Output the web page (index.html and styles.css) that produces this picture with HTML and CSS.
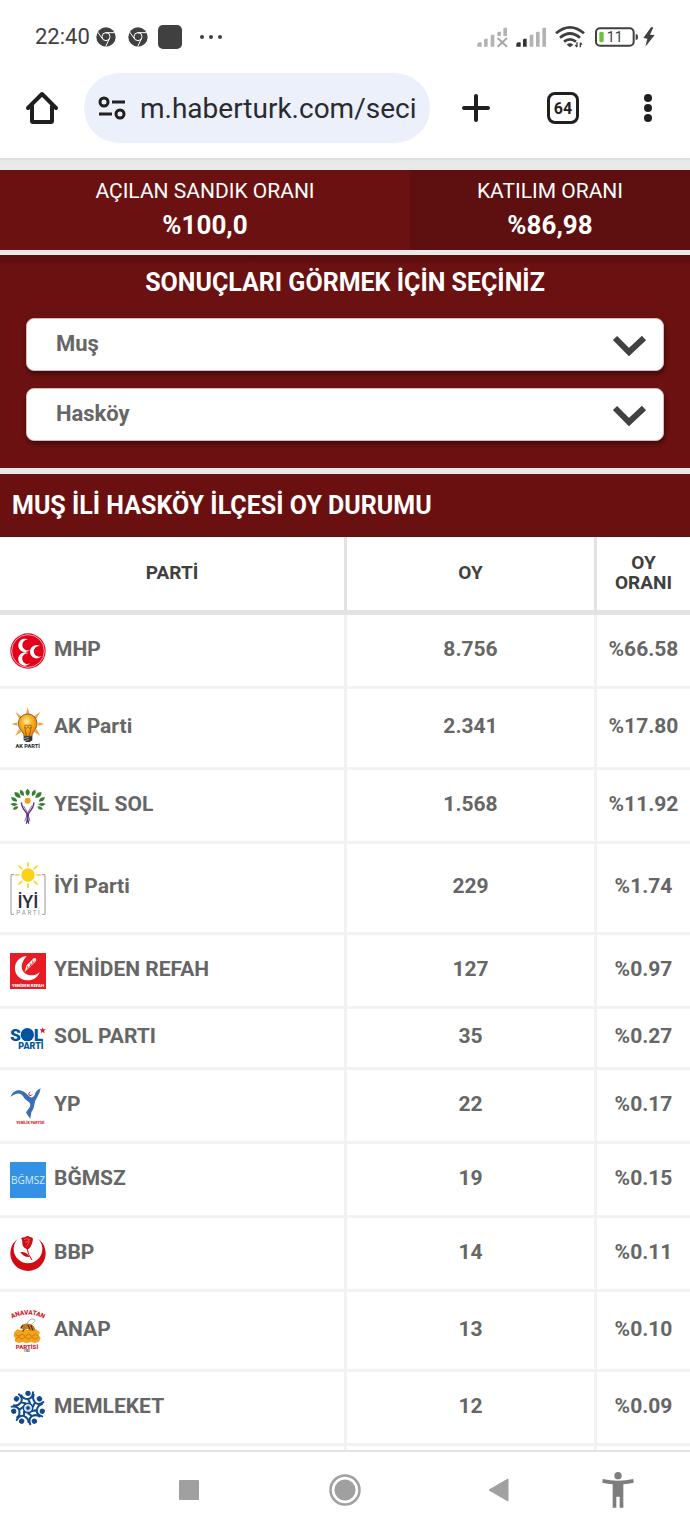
FILE: index.html
```html
<!DOCTYPE html>
<html lang="tr">
<head>
    <meta charset="UTF-8">
    <meta name="viewport" content="width=device-width, initial-scale=1.0">
    <title>Muş Hasköy Seçim Sonuçları</title>
    <link rel="stylesheet" href="styles.css">
</head>
<body>
    <!-- Status bar -->
    <div class="status-bar">
        <div class="status-left">
            <span class="clock">22:40</span>
            <svg class="chrome-icon" width="20" height="20" viewBox="0 0 60 60">
                <circle cx="30" cy="30" r="29" fill="#404040"/>
                <g fill="none" stroke="#fff" stroke-width="3">
                    <circle cx="30" cy="29" r="12"/>
                    <path d="M28 17h28M20 36L4 14M40 35L29 59"/>
                </g>
            </svg>
            <svg class="chrome-icon" width="20" height="20" viewBox="0 0 60 60">
                <circle cx="30" cy="30" r="29" fill="#404040"/>
                <g fill="none" stroke="#fff" stroke-width="3">
                    <circle cx="30" cy="29" r="12"/>
                    <path d="M28 17h28M20 36L4 14M40 35L29 59"/>
                </g>
            </svg>
            <span class="app-square"></span>
            <svg class="more-dots" width="24" height="6" viewBox="0 0 24 6" fill="#404040">
                <circle cx="3" cy="3" r="2"/><circle cx="12" cy="3" r="2"/><circle cx="21" cy="3" r="2"/>
            </svg>
        </div>
        <div class="status-right">
            <svg width="31" height="20" viewBox="0 0 93 60" fill="#b3b3b3">
                <path d="M1 59v-7q0-6 6-6h7v13zM21 59V39q0-4 5-4h6v24zM41 59V27q0-4 5-4h6v36zM61 27V18q0-4 5-4h6v13zM79 27V6q0-4 5-4h6v25z"/>
                <path d="M62 33l28 26M90 33L62 59" stroke="#a8a8a8" stroke-width="6"/>
            </svg>
            <svg width="31" height="20" viewBox="0 0 93 60" fill="#b3b3b3">
                <path fill="#333" d="M1 59v-7q0-6 6-6h7v13zM21 59V39q0-4 5-4h6v24z"/>
                <path d="M41 59V27q0-4 5-4h6v36zM60 59V18q0-4 5-4h6v45zM79 59V6q0-4 5-4h6v57z"/>
            </svg>
            <svg width="30" height="22" viewBox="0 0 90 66" fill="none" stroke="#404040" stroke-width="8">
                <path d="M3 22Q45-14 87 22M15 35Q45 10 75 35M27 47Q45 33 63 47"/>
                <path d="M35 56q10-8 20 0L45 64z" fill="#404040" stroke="none"/>
                <path d="M66 49v14M61 57l5 6M76 64V50M81 56l-5-6" stroke-width="4"/>
            </svg>
            <svg class="battery" width="43" height="20" viewBox="0 0 129 60">
                <rect x="3" y="4" width="113" height="52" rx="12" fill="none" stroke="#404040" stroke-width="6"/>
                <rect x="13" y="14" width="13" height="32" rx="5" fill="#6cc13a"/>
                <path d="M122 21q7 0 7 9t-7 9z" fill="#404040"/>
                <text x="35" y="45" font-size="43" fill="#404040">11</text>
            </svg>
            <svg width="12" height="20" viewBox="0 0 36 60" fill="#404040">
                <path d="M24 1L1 33l12 2L7 59l28-35-14-1 10-22z"/>
            </svg>
        </div>
    </div>

    <!-- Browser toolbar -->
    <header class="toolbar">
        <button class="icon-btn" aria-label="Ana sayfa">
            <svg width="32" height="34" viewBox="0 0 32 34" fill="none" stroke="#1f1f1f" stroke-width="4" stroke-linecap="round" stroke-linejoin="round">
                <path d="M2 17L16 3l14 14M6 15v15q0 1 1 1h18q1 0 1-1V15"/>
            </svg>
        </button>
        <div class="url-bar">
            <svg width="28" height="24" viewBox="0 0 28 24" fill="none" stroke="#1f1f1f" stroke-width="3">
                <circle cx="6" cy="6" r="4"/><circle cx="22" cy="18" r="4"/>
                <path d="M14 6h13M1 18h13"/>
            </svg>
            <input type="text" value="m.haberturk.com/seci" aria-label="Adres">
        </div>
        <button class="icon-btn plus" aria-label="Yeni sekme">
            <svg width="28" height="28" viewBox="0 0 28 28" stroke="#1f1f1f" stroke-width="4" stroke-linecap="round">
                <path d="M14 2v24M2 14h24"/>
            </svg>
        </button>
        <button class="icon-btn tabs" aria-label="Sekmeler">64</button>
        <button class="icon-btn menu" aria-label="Menü">
            <svg width="10" height="30" viewBox="0 0 10 30" fill="#1f1f1f">
                <circle cx="5" cy="5" r="4"/><circle cx="5" cy="15" r="4"/><circle cx="5" cy="25" r="4"/>
            </svg>
        </button>
    </header>

    <main>
        <section class="stats">
            <div class="stat">
                <div class="stat-label">AÇILAN SANDIK ORANI</div>
                <div class="stat-value">%100,0</div>
            </div>
            <div class="stat stat-dark">
                <div class="stat-label">KATILIM ORANI</div>
                <div class="stat-value">%86,98</div>
            </div>
        </section>

        <section class="picker">
            <h2>SONUÇLARI GÖRMEK İÇİN SEÇİNİZ</h2>
            <div class="select-box">
                <select aria-label="İl"><option>Muş</option></select>
                <svg width="33" height="22" viewBox="0 0 33 22" fill="none" stroke="#404141" stroke-width="6"><path d="M2 3l14 14L31 3"/></svg>
            </div>
            <div class="select-box">
                <select aria-label="İlçe"><option>Hasköy</option></select>
                <svg width="33" height="22" viewBox="0 0 33 22" fill="none" stroke="#404141" stroke-width="6"><path d="M2 3l14 14L31 3"/></svg>
            </div>
        </section>

        <h2 class="table-title">MUŞ İLİ HASKÖY İLÇESİ OY DURUMU</h2>

        <table class="results">
            <colgroup>
                <col>
                <col class="col-votes">
                <col class="col-rate">
            </colgroup>
            <thead>
                <tr><th>PARTİ</th><th>OY</th><th>OY ORANI</th></tr>
            </thead>
            <tbody>
                <tr>
                    <td><div class="party">
                        <svg width="36" height="36" viewBox="0 0 108 108">
                            <circle cx="54" cy="54" r="53" fill="#e2001a"/>
                            <circle cx="54" cy="54" r="49" fill="none" stroke="#fff" stroke-width="2"/>
                            <g fill="#fff">
                                <path d="M55 20a20 20 0 1 0 5 30a16 16 0 1 1-5-30z"/>
                                <path d="M55 61a20 20 0 1 0 5 30a16 16 0 1 1-5-30z"/>
                                <path d="M90 39a20 20 0 1 0 5 30a16 16 0 1 1-5-30z"/>
                            </g>
                        </svg>
                        <span>MHP</span>
                    </div></td>
                    <td>8.756</td><td>%66.58</td>
                </tr>
                <tr>
                    <td><div class="party">
                        <svg width="36" height="43" viewBox="0 0 108 129">
                            <defs>
                                <radialGradient id="bulb" cx="45%" cy="35%"><stop offset="0" stop-color="#fff0a0"/><stop offset=".5" stop-color="#fcb92b"/><stop offset="1" stop-color="#f39200"/></radialGradient>
                            </defs>
                            <path fill="#f6a14a" d="M53 1l6 21H47zM16 14l20 15-8 7zM91 14L71 29l8 7zM4 51l18-5v11zM103 51l-18-5v11zM16 87l11-21 8 8zM91 87L80 66l-8 8z"/>
                            <path fill="url(#bulb)" stroke="#333" stroke-width="2" d="M42 88c0-14-17-20-17-39a28 28 0 0 1 56 0c0 19-15 25-15 39z"/>
                            <path fill="none" stroke="#7a4600" stroke-width="2" d="M49 87l-5-28 5 6 5-6 5 6 5-6-6 28M43 55h22"/>
                            <path fill="#333" d="M41 88h26v12l-8 5H48l-7-5z"/>
                            <path stroke="#ddd" stroke-width="2" d="M42 94l14-2M43 101l14-3"/>
                            <text x="53" y="124" font-size="17" font-weight="700" text-anchor="middle" fill="#222">AK PARTİ</text>
                        </svg>
                        <span>AK Parti</span>
                    </div></td>
                    <td>2.341</td><td>%17.80</td>
                </tr>
                <tr>
                    <td><div class="party">
                        <svg width="36" height="36" viewBox="0 0 108 108">
                            <g fill="#3b7d34">
                                <path d="M53 2q13 10 0 22q-13-12 0-22z"/>
                                <path d="M31 5q14 4 10 19q-15-3-10-19zM76 5q-14 4-10 19q15-3 10-19z"/>
                                <path d="M13 13q18-2 19 17q-19 0-19-17zM95 13q-18-2-19 17q19 0 19-17z"/>
                                <path d="M3 28q15-2 19 12q-16 3-19-12zM105 28q-15-2-19 12q16 3 19-12z"/>
                                <path d="M1 48q12-7 22 1q-10 10-22-1zM107 48q-12-7-22 1q10 10 22-1z"/>
                                <path d="M8 64q6-13 17-8q-4 12-17 8zM99 64q-6-13-17-8q4 12 17 8z"/>
                            </g>
                            <circle cx="53" cy="38" r="9" fill="#f59c1a"/>
                            <g fill="none" stroke="#5b2d82" stroke-width="4">
                                <path d="M34 43q2 17 13 28q9 12 2 36M72 43q-2 17-13 28q-9 12-3 36"/>
                                <path d="M40 53q11 14 15 29l5 18M66 53q-11 14-15 29l-7 18" stroke-width="2"/>
                            </g>
                        </svg>
                        <span>YEŞİL SOL</span>
                    </div></td>
                    <td>1.568</td><td>%11.92</td>
                </tr>
                <tr>
                    <td><div class="party">
                        <svg width="36" height="53" viewBox="0 0 108 159">
                            <path d="M13 38H3v119h9M95 38h10v119h-9" fill="none" stroke="#999" stroke-width="3"/>
                            <circle cx="54" cy="39" r="20" fill="#fcd116"/>
                            <path stroke="#fcd116" stroke-width="5" stroke-linecap="round" d="M54 3v9M54 66v10M17 39h10M81 39h10M27 12l8 8M81 12l-8 8M27 66l8-8M81 66l-8-8"/>
                            <text x="54" y="137" font-size="54" font-weight="500" text-anchor="middle" fill="#2b2b3c">İYİ</text>
                            <text x="54" y="158" font-size="19" font-weight="400" text-anchor="middle" fill="#999">P A R T İ</text>
                        </svg>
                        <span>İYİ Parti</span>
                    </div></td>
                    <td>229</td><td>%1.74</td>
                </tr>
                <tr>
                    <td><div class="party">
                        <svg width="36" height="36" viewBox="0 0 108 108">
                            <path fill="#e81c24" d="M0 0h108v108H0z"/>
                            <path fill="#fff" d="M50 9C3 13 3 79 51 82c19 1 34-10 38-26C67 83 8 58 50 9z"/>
                            <path fill="#fff" d="M43 60l7-23 22-22q9 0 6 9L57 45z"/>
                            <path stroke="#e81c24" stroke-width="2" d="M43 60l32-38M52 38l2 9M60 30l2 9M67 22l2 9"/>
                            <text x="54" y="101" font-size="13" font-weight="900" text-anchor="middle" fill="#fff">YENİDEN REFAH</text>
                        </svg>
                        <span>YENİDEN REFAH</span>
                    </div></td>
                    <td>127</td><td>%0.97</td>
                </tr>
                <tr>
                    <td><div class="party">
                        <svg width="36" height="23" viewBox="0 0 108 69">
                            <g fill="#0054a0" font-weight="900">
                                <text x="0" y="41" font-size="52">S</text>
                                <circle cx="52" cy="23" r="20"/>
                                <text x="71" y="41" font-size="52">L</text>
                                <text x="25" y="67" font-size="27">PARTİ</text>
                            </g>
                            <path fill="#d5202c" d="M98 1l2 6h7l-5 5 2 7-6-4-6 4 2-7-5-5h7z"/>
                        </svg>
                        <span>SOL PARTI</span>
                    </div></td>
                    <td>35</td><td>%0.27</td>
                </tr>
                <tr>
                    <td><div class="party">
                        <svg width="36" height="36" viewBox="0 0 108 108">
                            <path fill="#3a70b2" d="M1 27C10 5 26 2 43 12q9 7 17 15 9 4 14-6 3-14 18-20-2 16-12 30-6 8-7 19-1 12-9 23l-3 19q-10-11-13-19l11-15q5-12-4-17-10-5-17-18Q26 8 1 27z"/>
                            <path fill="none" stroke="#d8232f" stroke-width="3" d="M61 12q-8 3-3 10 6 3 9-3"/>
                            <text x="61" y="107" font-size="11" font-weight="900" text-anchor="middle" fill="#d8232f">YENİLİK PARTİSİ</text>
                        </svg>
                        <span>YP</span>
                    </div></td>
                    <td>22</td><td>%0.17</td>
                </tr>
                <tr>
                    <td><div class="party">
                        <svg width="36" height="36" viewBox="0 0 108 108">
                            <path fill="#3492e5" d="M0 0h108v108H0z"/>
                            <text class="bgmsz" x="54" y="67" font-size="30" text-anchor="middle" fill="#d8ebfb">BĞMSZ</text>
                        </svg>
                        <span>BĞMSZ</span>
                    </div></td>
                    <td>19</td><td>%0.15</td>
                </tr>
                <tr>
                    <td><div class="party">
                        <svg width="36" height="36" viewBox="0 0 108 108">
                            <path fill="#d20a11" d="M24 8a53 53 0 1 0 60 0a43 43 0 1 1-60 0z"/>
                            <path fill="#d20a11" d="M33 7q6-4 12-3 8-7 14-1 8 1 10 5-1 15-8 25-5 9-11 6-13-5-13-18 2-8-4-14z"/>
                            <path fill="none" stroke="#fff" stroke-width="1" d="M42 11q8-7 17 0M45 19q9 0 13-9M48 32q9-9 10-18"/>
                            <path fill="none" stroke="#d20a11" stroke-width="3" d="M51 37q2 18 15 35"/>
                            <path fill="#d20a11" d="M31 48q19-2 28 15-18 2-28-15z"/>
                        </svg>
                        <span>BBP</span>
                    </div></td>
                    <td>14</td><td>%0.11</td>
                </tr>
                <tr>
                    <td><div class="party">
                        <svg width="36" height="42" viewBox="0 0 108 126">
                            <path id="arc" d="M1 29Q54-2 107 29" fill="none"/>
                            <text font-size="19" font-weight="900" fill="#d5202c" text-anchor="middle"><textPath href="#arc" startOffset="50%">ANAVATAN</textPath></text>
                            <path fill="#f2a51c" d="M13 66l9-8 11 3 8-5 12 4 12-4 15 3 10 8-4 9 6 8-5 11-12 4-12-3-14 4-11-4-12 3-12-5 2-9-5-8z"/>
                            <path fill="none" stroke="#ad6210" stroke-width="2" d="M16 72l10 7 10-7 10 7 10-7 10 7 10-7 10 7M16 88l10-7 10 7 10-7 10 7 10-7 10 7 8-6"/>
                            <path fill="#fff" stroke="#888" stroke-width="2" d="M49 45q8-21 23-18 9 6-14 20z"/>
                            <path fill="#c47a1c" d="M30 54q5-13 17-13 25-2 30 20-14 5-25-5-10 5-22-2z"/>
                            <path fill="none" stroke="#42240c" stroke-width="3" d="M54 45l6 13M63 45l5 15M38 46l-5 9M43 57l-5 8"/>
                            <text x="51" y="116" font-size="18" font-weight="900" text-anchor="middle" fill="#d5202c">PARTİSİ</text>
                            <text x="50" y="126" font-size="8" font-weight="700" text-anchor="middle" fill="#444">1983</text>
                        </svg>
                        <span>ANAP</span>
                    </div></td>
                    <td>13</td><td>%0.10</td>
                </tr>
                <tr>
                    <td><div class="party">
                        <svg width="36" height="36" viewBox="-54 -54 108 108">
                            <defs>
                                <g id="person">
                                    <circle cy="-44" r="8" fill="#124b8d"/>
                                    <path d="M-20-38Q-15-27 0-27Q14-29 15-47M0-27l6 12" fill="none" stroke="#124b8d" stroke-width="6" stroke-linecap="round"/>
                                </g>
                            </defs>
                            <use href="#person"/>
                            <use href="#person" transform="rotate(51.4)"/>
                            <use href="#person" transform="rotate(102.9)"/>
                            <use href="#person" transform="rotate(154.3)"/>
                            <use href="#person" transform="rotate(205.7)"/>
                            <use href="#person" transform="rotate(257.1)"/>
                            <use href="#person" transform="rotate(308.6)"/>
                            <circle r="14" fill="#fff" stroke="#124b8d" stroke-width="5"/>
                            <circle r="7" fill="#124b8d" stroke="#8fc6e8" stroke-width="3"/>
                        </svg>
                        <span>MEMLEKET</span>
                    </div></td>
                    <td>12</td><td>%0.09</td>
                </tr>
                <tr class="next-row"><td></td><td></td><td></td></tr>
            </tbody>
        </table>
    </main>

    <!-- System navigation -->
    <nav class="system-nav">
        <button aria-label="Son uygulamalar">
            <svg width="22" height="22" viewBox="0 0 22 22"><rect x="1" y="1" width="20" height="20" rx="1" fill="#a0a0a0"/></svg>
        </button>
        <button aria-label="Ana ekran">
            <svg width="32" height="32" viewBox="0 0 32 32"><circle cx="16" cy="16" r="14.5" fill="none" stroke="#a0a0a0" stroke-width="2.5"/><circle cx="16" cy="16" r="10.5" fill="#a0a0a0"/></svg>
        </button>
        <button aria-label="Geri">
            <svg width="26" height="26" viewBox="0 0 26 26"><path d="M20 2v22L1 13z" fill="#a0a0a0" stroke="#a0a0a0" stroke-linejoin="round"/></svg>
        </button>
        <button aria-label="Erişilebilirlik">
            <svg width="32" height="36" viewBox="0 0 96 108" fill="#7d7d7d"><circle cx="48" cy="11" r="11"/><path d="M2 21q46 10 92 0l1 11q-16 4-31 5v70H53V74H43v33H32V37Q17 36 1 32z"/></svg>
        </button>
    </nav>
</body>
</html>
```

FILE: styles.css
```css
* {
    margin: 0;
    padding: 0;
    box-sizing: border-box;
}

body {
    font-family: Roboto, Arial, sans-serif;
    background-color: #fff;
    color: #666;
    min-height: 100vh;
    display: flex;
    flex-direction: column;
}

button {
    border: none;
    background: none;
    font-family: inherit;
    cursor: pointer;
}

svg {
    display: block;
    flex-shrink: 0;
    overflow: visible;
}

/* status bar */
.status-bar {
    display: flex;
    justify-content: space-between;
    align-items: center;
    height: 73px;
    padding: 0 35px;
}

.status-left,
.status-right {
    display: flex;
    align-items: center;
}

.clock {
    font-size: 22px;
    color: #404040;
}

.chrome-icon {
    margin-left: 6px;
}

.chrome-icon + .chrome-icon {
    margin-left: 12px;
}

.app-square {
    width: 24px;
    height: 24px;
    margin-left: 10px;
    border-radius: 5px;
    background-color: #404040;
}

.more-dots {
    margin-left: 17px;
}

.status-right {
    gap: 8px;
}

.battery {
    margin: 0 -3px 0 2px;
}

/* browser toolbar */
.toolbar {
    display: flex;
    align-items: center;
    height: 85px;
    padding: 0 26px 15px;
}

.icon-btn {
    display: flex;
    align-items: center;
    justify-content: center;
    width: 32px;
    height: 34px;
}

.url-bar {
    flex: 1;
    min-width: 0;
    display: flex;
    align-items: center;
    gap: 14px;
    height: 70px;
    margin-left: 26px;
    padding: 0 12px 0 14px;
    border-radius: 35px;
    background-color: #ecf0fa;
}

.url-bar input {
    flex: 1;
    min-width: 0;
    border: none;
    outline: none;
    background: none;
    font-family: inherit;
    font-size: 28px;
    color: #2a2b2e;
}

.plus {
    margin-left: 30px;
}

.tabs {
    height: 32px;
    margin-left: 55px;
    border: 3px solid #1f1f1f;
    border-radius: 8px;
    font-size: 16px;
    font-weight: 700;
    color: #1f1f1f;
}

.menu {
    margin-left: 53px;
}

/* page */
main {
    flex: 1;
    padding-top: 12px;
    background: linear-gradient(#dcdcdc, #e9e9e9 3px);
}

.stats {
    display: grid;
    grid-template-columns: 41fr 28fr;
    margin-bottom: 5px;
    text-align: center;
    color: #fff;
}

.stat {
    padding: 6px 0;
    background-color: #6b1111;
}

.stat-dark {
    background-color: #5e0f0f;
}

.stat-label {
    font-size: 21px;
    line-height: 30px;
}

.stat-value {
    font-size: 26px;
    font-weight: 700;
    line-height: 38px;
}

.picker {
    padding: 10px 26px 27px;
    margin-bottom: 6px;
    background: linear-gradient(#5a0e0e, #5e0f0f 7px, #6b1111 8px);
}

h2 {
    font-size: 25px;
    font-weight: 700;
    line-height: 36px;
    color: #fff;
}

.picker h2 {
    text-align: center;
}

.select-box {
    position: relative;
    margin-top: 17px;
}

.select-box select {
    appearance: none;
    display: block;
    width: 100%;
    height: 53px;
    padding: 0 60px 2px 29px;
    border: 1px solid #d9b9b9;
    border-radius: 8px;
    background-color: #fff;
    box-shadow: 1px 3px 4px rgba(0, 0, 0, 0.4);
    font-family: inherit;
    font-size: 22px;
    font-weight: 700;
    color: #666;
}

.select-box svg {
    position: absolute;
    top: 17px;
    right: 18px;
    pointer-events: none;
}

.table-title {
    padding: 14px 12px 13px;
    background-color: #6b1010;
}

/* results table */
.results {
    width: 100%;
    table-layout: fixed;
    border-collapse: separate;
    border-spacing: 0;
    background-color: #fff;
}

.col-votes {
    width: 250px;
}

.col-rate {
    width: 93px;
}

th,
td {
    text-align: center;
    vertical-align: middle;
    border-right: 3px solid #f2f2f2;
    border-bottom: 3px solid #f2f2f2;
}

th:last-child,
td:last-child {
    border-right: none;
}

th {
    height: 78px;
    padding: 0 15px 2px;
    border-right-color: #e2e2e2;
    border-bottom: 5px solid #e2e2e2;
    font-size: 19px;
    line-height: 20px;
    color: #404040;
}

td {
    padding-bottom: 4px;
    font-size: 21px;
    font-weight: 700;
    line-height: 22px;
}

td:first-child {
    padding-bottom: 0;
}

.party {
    display: flex;
    align-items: center;
    gap: 8px;
    padding: 18px 10px 17px;
}

.party span {
    padding-bottom: 5px;
    line-height: 18px;
}

.bgmsz {
    font-family: "Open Sans", sans-serif;
    font-weight: 400;
}

.next-row td {
    height: 4px;
    padding: 0;
    border-bottom: none;
}

/* bottom navigation */
.system-nav {
    display: grid;
    grid-template-columns: 2fr 2fr 2fr 1fr;
    height: 83px;
    padding: 0 33px 5px 111px;
    border-top: 2px solid #e2e2e2;
    background-color: #fff;
}

.system-nav button {
    display: flex;
    align-items: center;
    justify-content: center;
}
```
